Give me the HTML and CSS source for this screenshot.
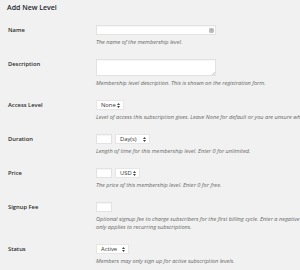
FILE: index.html
```html
<!DOCTYPE html>
<html lang="en">
<head>
    <title>Add New Level</title>
    <link rel="stylesheet" href="styles.css">
</head>
<body>
    <div class="wrap">
        <h2 class="page-title">Add New Level</h2>

        <table class="form-table">
            <tr>
                <th>Name</th>
                <td>
                    <div class="field-wide">
                        <input type="text" class="input-wide">
                        <svg class="key-icon" width="5" height="5" viewBox="0 0 5 5">
                            <rect x="0.5" y="0.5" width="4" height="4" rx="0.6" fill="#c8c8c8" stroke="#9a9a9a" stroke-width="0.5"/>
                            <line x1="1.3" y1="1.8" x2="3.7" y2="1.8" stroke="#777" stroke-width="0.4"/>
                            <line x1="1.3" y1="3.0" x2="3.7" y2="3.0" stroke="#777" stroke-width="0.4"/>
                        </svg>
                    </div>
                    <p class="description">The name of the membership level.</p>
                </td>
            </tr>
            <tr>
                <th>Description</th>
                <td>
                    <div class="field-wide">
                        <textarea class="textarea-wide"></textarea>
                        <svg class="grip" width="3" height="3" viewBox="0 0 3 3">
                            <path d="M3 0 L0 3 M3 1.5 L1.5 3" stroke="#999" stroke-width="0.5"/>
                        </svg>
                    </div>
                    <p class="description">Membership level description. This is shown on the registration form.</p>
                </td>
            </tr>
            <tr>
                <th>Access Level</th>
                <td>
                    <span class="select sel-access">None <svg class="arrows" width="3" height="5" viewBox="0 0 3 5"><path d="M0 2 L1.5 0 L3 2 Z M0 3 L1.5 5 L3 3 Z" fill="#444"/></svg></span>
                    <p class="description">Level of access this subscription gives. Leave None for default or you are unsure what this is.</p>
                </td>
            </tr>
            <tr>
                <th>Duration</th>
                <td>
                    <div class="inline-fields">
                        <input type="text" class="input-small">
                        <span class="select sel-days">Day(s) <svg class="arrows" width="3" height="5" viewBox="0 0 3 5"><path d="M0 2 L1.5 0 L3 2 Z M0 3 L1.5 5 L3 3 Z" fill="#444"/></svg></span>
                    </div>
                    <p class="description">Length of time for this membership level. Enter 0 for unlimited.</p>
                </td>
            </tr>
            <tr>
                <th>Price</th>
                <td>
                    <div class="inline-fields">
                        <input type="text" class="input-small">
                        <span class="select sel-currency">USD <svg class="arrows" width="3" height="5" viewBox="0 0 3 5"><path d="M0 2 L1.5 0 L3 2 Z M0 3 L1.5 5 L3 3 Z" fill="#444"/></svg></span>
                    </div>
                    <p class="description">The price of this membership level. Enter 0 for free.</p>
                </td>
            </tr>
            <tr>
                <th>Signup Fee</th>
                <td>
                    <input type="text" class="input-small">
                    <p class="description">Optional signup fee to charge subscribers for the first billing cycle. Enter a negative amount to give a discount.<br>only applies to recurring subscriptions.</p>
                </td>
            </tr>
            <tr>
                <th>Status</th>
                <td>
                    <span class="select sel-status">Active <svg class="arrows" width="3" height="5" viewBox="0 0 3 5"><path d="M0 2 L1.5 0 L3 2 Z M0 3 L1.5 5 L3 3 Z" fill="#444"/></svg></span>
                    <p class="description">Members may only sign up for active subscription levels.</p>
                </td>
            </tr>
        </table>
    </div>
</body>
</html>
```

FILE: styles.css
```css
html, body {
    margin: 0;
    padding: 0;
    background-color: #f1f1f1;
    overflow: hidden;
}
body {
    font-family: "Open Sans", "Liberation Sans", sans-serif;
    color: #23282d;
}
.wrap {
    width: 600px;
    padding: 3px 0 0 7px;
}
.page-title {
    margin: 0;
    font-size: 7px;
    font-weight: 600;
    line-height: 10px;
    color: #23282d;
}
.form-table {
    border-collapse: collapse;
    margin-top: 5.5px;
}
.form-table th {
    width: 88px;
    padding: 7px 0 6px 1px;
    text-align: left;
    vertical-align: top;
    font-size: 5.8px;
    font-weight: 600;
    line-height: 9px;
    color: #2a2a2a;
}
.form-table td {
    padding: 6.5px 0;
    vertical-align: top;
}
input, textarea {
    display: block;
    box-sizing: border-box;
    margin: 0;
    border: 1px solid #e2e2e2;
    background-color: #fff;
    box-shadow: inset 0 1px 1px rgba(0, 0, 0, 0.04);
    padding: 0;
    outline: none;
}
.field-wide {
    position: relative;
    width: 120px;
}
.input-wide {
    width: 120px;
    height: 10px;
}
.key-icon {
    position: absolute;
    right: 2px;
    top: 2.5px;
}
.textarea-wide {
    width: 120px;
    height: 17px;
    resize: none;
}
.grip {
    position: absolute;
    right: 1px;
    bottom: 1px;
}
.input-small {
    width: 16px;
    height: 10px;
}
.inline-fields {
    display: flex;
    gap: 3px;
}
.select {
    display: flex;
    align-items: center;
    justify-content: space-between;
    box-sizing: border-box;
    height: 10px;
    padding: 0 3px 0 4px;
    background-color: #fff;
    border: 1px solid #e6e6e6;
    font-size: 5.8px;
    color: #333;
}
.sel-access {
    width: 28px;
}
.sel-days {
    width: 35px;
}
.sel-currency {
    width: 25px;
}
.sel-status {
    width: 33px;
}
.arrows {
    flex: none;
}
.description {
    margin: 3px 0 0;
    font-size: 5.6px;
    line-height: 8px;
    font-style: italic;
    color: #666;
    white-space: nowrap;
}
```
